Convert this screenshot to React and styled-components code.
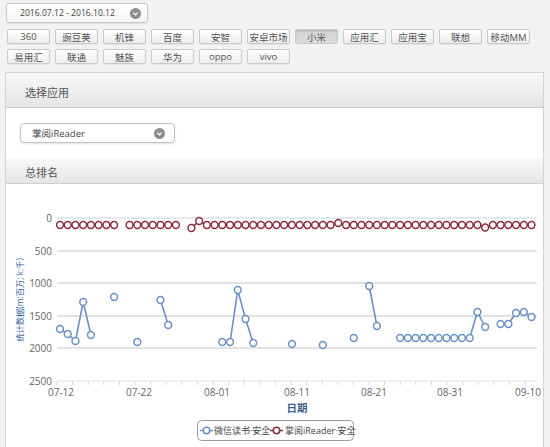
import React from 'react';
import styled, { createGlobalStyle } from 'styled-components';

const GlobalStyle = createGlobalStyle`
  body {
    margin: 0;
    background: #f2f2f2;
    font-family: "Open Sans", "Noto Sans CJK SC", sans-serif;
    color: #444;
  }
`;

const Page = styled.div`
  width: 550px;
  height: 447px;
  overflow: hidden;
  padding-top: 3px;
  box-sizing: border-box;
`;

const DateBox = styled.div`
  margin-left: 6px;
  width: 142px;
  height: 20px;
  box-sizing: border-box;
  border: 1px solid #c8c8c8;
  border-radius: 3px;
  background: linear-gradient(#ffffff, #f4f4f4);
  box-shadow: 0 1px 1px rgba(0, 0, 0, 0.08);
  display: flex;
  align-items: center;
  justify-content: space-between;
  padding: 0 6px 0 13px;
  font-size: 8.6px;
  color: #444;
  white-space: nowrap;
`;

const ButtonGrid = styled.div`
  display: flex;
  flex-wrap: wrap;
  gap: 5px 5px;
  margin: 6px 0 0 7px;
  width: 530px;
`;

const Tab = styled.div`
  width: 43px;
  height: 15px;
  box-sizing: border-box;
  border: 1px solid #c9c9c9;
  border-radius: 2px;
  background: ${(p) => (p.$active ? 'linear-gradient(#d2d2d2, #dedede)' : 'linear-gradient(#ffffff, #ececec)')};
  box-shadow: ${(p) => (p.$active ? 'inset 0 1px 2px rgba(0,0,0,0.15)' : '0 1px 0 rgba(0,0,0,0.05)')};
  display: flex;
  align-items: center;
  justify-content: center;
  font-size: 9.5px;
  color: #555;
  white-space: nowrap;
`;

const Panel = styled.div`
  margin: 8px 6px 0 5px;
  border: 1px solid #d4d4d4;
  background: #fff;
`;

const PanelHeader = styled.div`
  height: ${(p) => p.$h}px;
  box-sizing: border-box;
  border-bottom: 1px solid #cfcfcf;
  background: linear-gradient(#f8f8f8, #e5e5e5);
  display: flex;
  align-items: center;
  padding: ${(p) => p.$top}px 0 0 19px;
  font-size: 11px;
  color: #555;
`;

const PanelBody = styled.div`
  padding: 15px 14px 15px;
`;

const Select = styled.div`
  width: 155px;
  height: 20px;
  box-sizing: border-box;
  border: 1px solid #c4c4c4;
  border-radius: 4px;
  background: #fff;
  box-shadow: 0 1px 2px rgba(0, 0, 0, 0.12);
  display: flex;
  align-items: center;
  justify-content: space-between;
  padding: 0 9px 0 11px;
  font-size: 9.5px;
  color: #444;
`;

const ChartBody = styled.div`
  height: 270px;
  svg {
    display: block;
  }
`;

const Caret = () => (
  <svg width="11" height="11" viewBox="0 0 11 11">
    <circle cx="5.5" cy="5.5" r="5.5" fill="#8d8d8d" />
    <path d="M3.2 4.6 L5.5 6.8 L7.8 4.6" stroke="#fff" strokeWidth="1.3" fill="none" />
  </svg>
);

const X0 = 60;
const DX = 7.73;
const xi = (i) => X0 + i * DX;

const redGroups = [];
{
  const mk = (a, b) => {
    const g = [];
    for (let i = a; i <= b; i++) {
      let y = 225;
      if (i === 17) y = 228;
      if (i === 18) y = 221;
      if (i === 36) y = 223;
      if (i === 55) y = 227.5;
      g.push([i, y]);
    }
    return g;
  };
  redGroups.push(mk(0, 7), mk(9, 15), mk(17, 61));
}

const blueGroups = [
  [[0, 329], [1, 334], [2, 341], [3, 302], [4, 335]],
  [[7, 297]],
  [[10, 342]],
  [[13, 300], [14, 325]],
  [[21, 342], [22, 342], [23, 290], [24, 319], [25, 343]],
  [[30, 344]],
  [[34, 345]],
  [[38, 338]],
  [[40, 286], [41, 326]],
  [
    [44, 338], [45, 338], [46, 338], [47, 338], [48, 338], [49, 338],
    [50, 338], [51, 338], [52, 338], [53, 338], [54, 312], [55, 327],
  ],
  [[57, 324], [58, 324], [59, 313], [60, 312], [61, 317]],
];

const BLUE = '#6a90c6';
const RED = '#8e2a3e';

const Series = ({ groups, color }) => (
  <g>
    {groups.map((g, k) => (
      <g key={k}>
        {g.length > 1 && (
          <polyline
            points={g.map(([i, y]) => `${xi(i)},${y}`).join(' ')}
            fill="none"
            stroke={color}
            strokeWidth="1.6"
          />
        )}
        {g.map(([i, y]) => (
          <circle key={i} cx={xi(i)} cy={y} r="3.4" fill="#fff" stroke={color} strokeWidth="1.5" />
        ))}
      </g>
    ))}
  </g>
);

const yTicks = [
  ['0', 218],
  ['500', 251],
  ['1000', 283],
  ['1500', 316],
  ['2000', 348],
  ['2500', 381],
];

const xLabels = [
  ['07-12', 61],
  ['07-22', 139],
  ['08-01', 217],
  ['08-11', 297],
  ['08-21', 374],
  ['08-31', 450],
  ['09-10', 528],
];

function Chart() {
  const ticks = [];
  for (let x = 57; x <= 537; x += 15.6) ticks.push(x);
  return (
    <svg width="537" height="270" viewBox="6 184 537 270">
      {yTicks.slice(1, 5).map(([, y]) => (
        <line key={y} x1="57" x2="537" y1={y} y2={y} stroke="#e2e2e2" strokeWidth="2" />
      ))}
      <line x1="57" x2="537" y1="218" y2="218" stroke="#c9d6dc" strokeWidth="1" />
      <line x1="57" x2="537" y1="381" y2="381" stroke="#e0e0e0" strokeWidth="1" />
      {ticks.map((x) => (
        <line key={x} x1={x} x2={x} y1="381" y2="385" stroke="#d6d6d6" strokeWidth="1" />
      ))}
      {yTicks.map(([t, y]) => (
        <text key={t} x="52" y={y + 3.5} textAnchor="end" fontSize="10" fill="#666">
          {t}
        </text>
      ))}
      {xLabels.map(([t, x]) => (
        <text key={t} x={x} y="396" textAnchor="middle" fontSize="10" fill="#666">
          {t}
        </text>
      ))}
      <text x="297" y="412" textAnchor="middle" fontSize="10.5" fontWeight="bold" fill="#3d5f8e">
        日期
      </text>
      <text
        x="0"
        y="0"
        transform="translate(23 300) rotate(-90)"
        textAnchor="middle"
        fontSize="8.3"
        fill="#2f5ea3"
      >
        统计数据(m:百万; k:千)
      </text>
      <Series groups={redGroups} color={RED} />
      <Series groups={blueGroups} color={BLUE} />

      <rect x="197.5" y="420.5" width="156" height="20" rx="4" fill="#fff" stroke="#9a9a9a" />
      <line x1="200" x2="213" y1="430.5" y2="430.5" stroke={BLUE} strokeWidth="1.5" />
      <circle cx="206.5" cy="430.5" r="3.2" fill="#fff" stroke={BLUE} strokeWidth="1.5" />
      <text x="214" y="434" fontSize="9" fill="#444">微信读书·安全</text>
      <line x1="270" x2="283" y1="430.5" y2="430.5" stroke={RED} strokeWidth="1.5" />
      <circle cx="276.5" cy="430.5" r="3.2" fill="#fff" stroke={RED} strokeWidth="1.5" />
      <text x="285" y="434" fontSize="9" fill="#444">掌阅iReader·安全</text>
    </svg>
  );
}

const stores = [
  '360', '豌豆荚', '机锋', '百度', '安智', '安卓市场', '小米', '应用汇', '应用宝', '联想', '移动MM',
  '易用汇', '联通', '魅族', '华为', 'oppo', 'vivo',
];

export default function App() {
  return (
    <Page>
      <GlobalStyle />
      <DateBox>
        <span>2016.07.12 - 2016.10.12</span>
        <Caret />
      </DateBox>
      <ButtonGrid>
        {stores.map((s) => (
          <Tab key={s} $active={s === '小米'}>
            {s}
          </Tab>
        ))}
      </ButtonGrid>
      <Panel>
        <PanelHeader $h={35} $top={3}>选择应用</PanelHeader>
        <PanelBody>
          <Select>
            <span>掌阅iReader</span>
            <Caret />
          </Select>
        </PanelBody>
        <PanelHeader $h={26} $top={3}>总排名</PanelHeader>
        <ChartBody>
          <Chart />
        </ChartBody>
      </Panel>
    </Page>
  );
}
